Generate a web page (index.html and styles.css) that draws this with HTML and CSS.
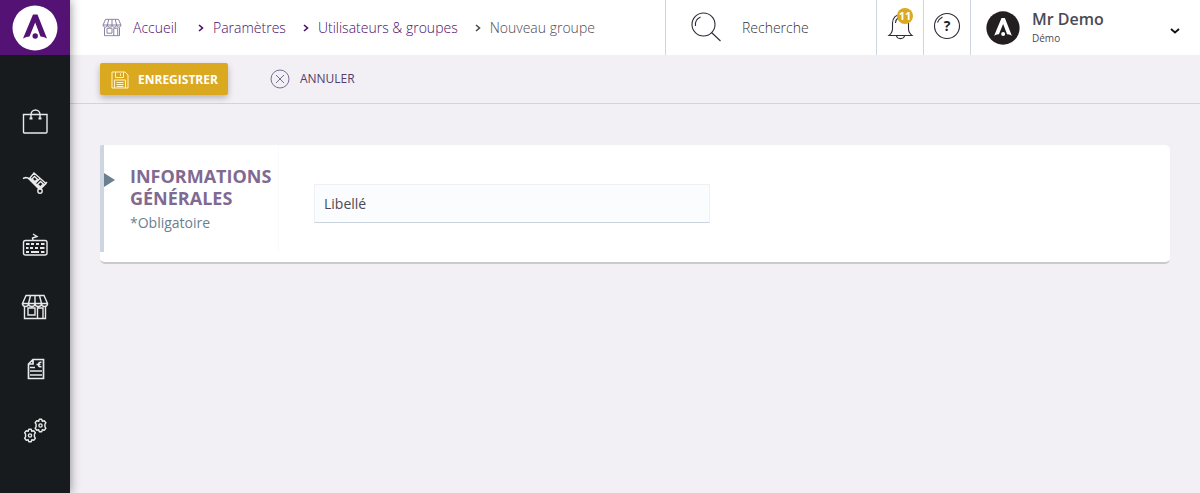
FILE: index.html
```html
<!DOCTYPE html>
<html lang="fr">
<head>
<meta charset="utf-8">
<meta name="viewport" content="width=device-width, initial-scale=1">
<title>Nouveau groupe</title>
<link rel="stylesheet" href="styles.css">
</head>
<body>
<svg class="defs" width="0" height="0" aria-hidden="true">
  <symbol id="mark" viewBox="0 0 46 46">
    <circle cx="23" cy="23" r="22.5" fill="var(--disc)"/>
    <path d="M21 9.500h4.500L35 33.500q-3.500-2-6.500-2L23.200 17.500 17.500 31.500q-3 0-6.500 2z" fill="var(--ink)"/>
    <circle cx="23.200" cy="31" r="2.700" fill="var(--ink)"/>
  </symbol>
  <symbol id="shop" viewBox="0 0 28 26">
    <path d="M5 1.500h18l3.500 8H1.500zM9.500 1.500l-2 8M14 1.500v8M18.500 1.500l2 8M1.500 9.500c0 4 6 4 6 0c0 4 6.500 4 6.500 0c0 4 6.500 4 6.500 0c0 4 6 4 6 0M3.500 13v11.500h21V13M7 14h7v7H7zM16.500 24.500V14H22v10.500"/>
  </symbol>
</svg>
<div class="app">
  <aside class="sidebar">
    <a class="brand" href="#" aria-label="Accueil"><svg width="46" height="46"><use href="#mark"/></svg></a>
    <nav class="menu" aria-label="Menu principal">
      <a href="#" aria-label="Ventes"><svg width="28" height="28" viewBox="0 0 28 28"><path d="M2.500 7.500h23.500V25a1 1 0 0 1-1 1H3.500a1 1 0 0 1-1-1zM10 11.500V7.500a4.500 4.500 0 0 1 9 0v4"/><path d="M8.500 11.500h3M17.500 11.500h3" stroke-width="2"/></svg></a>
      <a href="#" aria-label="Achats"><svg width="28" height="28" viewBox="0 0 28 28"><path d="M2 9.500l2.500-1 2.500.5L18.500 20.500M8.500 8.500l11 11 6.500-6.500M13 4l12 10.500-5.500 5.500L8.500 9.500zM19 9.500l-5.500 5.500M13.500 7.500l-2.500 2.500 3 2.800 2.500-2.600zM19.500 12.500l-3 3 2.800 2.500 3-3z"/><circle cx="19" cy="22" r="2.200"/></svg></a>
      <a href="#" aria-label="Caisse"><svg width="28" height="28" viewBox="0 0 28 28"><rect x="2.500" y="9.500" width="23.500" height="14.500" rx="2"/><path d="M12 3l4 2.500-4.500 1.500.5 2.500"/><path d="M5 13h3.500M10 13h3M15 13h3M20 13h3.500M5 17h2.500M9 17h3M14 17h3M19 17h4.500M5 21h3M10 21h8M20 21h3.500" stroke-width="2.200"/></svg></a>
      <a href="#" aria-label="Boutique"><svg width="28" height="26"><use href="#shop"/></svg></a>
      <a href="#" aria-label="Factures"><svg width="28" height="28" viewBox="0 0 28 28"><path d="M12 4.500h10.500V23.500h-15V9zM12 4.500V9H7.500M9 12.500h5M9 16h12M9 20h12" stroke-width="1.700"/><path d="M20.500 7.500c-3.500-1.500-4.500 5.500 0 4M15.500 9.500h4" stroke-width="1.600"/></svg></a>
      <a href="#" aria-label="Paramètres"><svg width="28" height="28" viewBox="0 0 28 28"><defs><path id="gear" d="M-1.200-6.200h2.400l.6 1.900 1.900-.5 1.700 2-1 1.700v2.200l1 1.700-1.700 2-1.900-.5-.6 1.900h-2.400l-.6-1.900-1.900.5-1.700-2 1-1.700v-2.200l-1-1.700 1.700-2 1.900.5z" stroke-linejoin="round"/></defs><use href="#gear" x="9" y="18.500"/><circle cx="9" cy="18.500" r="1.600"/><use href="#gear" x="19.500" y="8.500"/><circle cx="19.500" cy="8.500" r="1.600"/></svg></a>
    </nav>
  </aside>
  <div class="content">
    <header class="topbar">
      <nav class="crumbs" aria-label="Fil d'Ariane">
        <svg class="crumb-home" width="20" height="19" viewBox="0 0 28 26"><use href="#shop"/></svg>
        <ol>
          <li><a href="#">Accueil</a></li>
          <li><svg class="chev" viewBox="0 0 6 8"><path d="M1 1l3.500 3L1 7"/></svg><a href="#">Paramètres</a></li>
          <li><svg class="chev" viewBox="0 0 6 8"><path d="M1 1l3.500 3L1 7"/></svg><a href="#">Utilisateurs &amp; groupes</a></li>
          <li class="current"><svg class="chev" viewBox="0 0 6 8"><path d="M1 1l3.500 3L1 7"/></svg><span>Nouveau groupe</span></li>
        </ol>
      </nav>
      <label class="search">
        <svg width="30" height="30" viewBox="0 0 30 30"><circle cx="12.500" cy="12.500" r="11.500"/><path d="M20.500 20.500l9 8.500M4.500 14a8.500 8.500 0 0 1 5-9"/></svg>
        <input type="search" placeholder="Recherche" aria-label="Recherche">
      </label>
      <button class="tool" type="button" aria-label="Notifications">
        <svg width="28" height="28" viewBox="0 0 28 28"><path d="M3 23.500c2.500-2 3.500-4 3.500-7V11c0-5 3.500-8.500 8-8.500s8 3.500 8 8.500v5.500c0 3 1 5 3.500 7zM10.500 24c.8 3.500 7.200 3.500 8 0M9.500 11c0-2.500 1-4 2.500-5"/></svg>
        <span class="badge">11</span>
      </button>
      <button class="tool" type="button" aria-label="Aide">
        <svg width="28" height="28" viewBox="0 0 28 28"><circle cx="14" cy="14" r="12.500"/><path d="M4.500 10.500a10.500 10.500 0 0 1 5-5.500"/><text x="14" y="19">?</text></svg>
      </button>
      <button class="user" type="button">
        <svg class="avatar" width="34" height="34"><use href="#mark"/></svg>
        <span class="who"><strong>Mr Demo</strong><small>Démo</small></span>
        <svg class="down" width="10" height="6" viewBox="0 0 10 6"><path d="M1 1l4 3.500L9 1"/></svg>
      </button>
    </header>
    <div class="actions">
      <button class="save" type="submit" form="group">
        <svg width="18" height="18" viewBox="0 0 18 18"><path d="M1 1h13l3 3v13H1zM4.500 1v5.500h8V1M9.500 2.500v2.500M3.500 17V9h11v8M5.500 11.500h7M5.500 13.500h7M5.500 15.500h7"/></svg>
        Enregistrer
      </button>
      <button class="cancel" type="button">
        <svg width="20" height="20" viewBox="0 0 20 20"><circle cx="10" cy="10" r="9"/><path d="M6 6l8 8M14 6l-8 8"/></svg>
        Annuler
      </button>
    </div>
    <main>
      <form class="card" id="group">
        <div class="intro">
          <h2>Informations générales</h2>
          <p>*Obligatoire</p>
        </div>
        <div class="fields">
          <input class="field" type="text" placeholder="Libellé" aria-label="Libellé" required>
        </div>
      </form>
    </main>
  </div>
</div>
</body>
</html>
```

FILE: styles.css
```css
* { box-sizing: border-box; }

body {
  margin: 0;
  background: #f2f0f5;
  font-family: "Open Sans", sans-serif;
  font-size: 14px;
  line-height: 20px;
  color: #4a4a55;
}

.defs { position: absolute; }

svg { display: block; flex: none; fill: none; }

a { color: inherit; text-decoration: none; }

button, input { font: inherit; color: inherit; }

button { border: 0; padding: 0; background: none; cursor: pointer; }

.app { display: flex; min-height: 100vh; }

/* Sidebar */
.sidebar {
  position: relative;
  z-index: 1;
  flex: none;
  width: 70px;
  background: #171b1d;
  box-shadow: 0 0 10px rgba(0, 0, 0, 0.45);
}

.brand {
  --disc: #fff;
  --ink: #551275;
  display: flex;
  align-items: center;
  justify-content: center;
  height: 55px;
  padding-top: 1px;
  background: #551275;
}

.menu { padding-top: 35px; }

.menu a {
  display: flex;
  align-items: center;
  justify-content: center;
  height: 62px;
}

.menu svg { stroke: #e8e9ea; stroke-width: 1.4; }

/* Top bar */
.content { flex: 1; min-width: 0; }

.topbar {
  display: flex;
  height: 55px;
  background: #fff;
}

.crumbs {
  display: flex;
  flex: 1;
  align-items: center;
  gap: 11px;
  padding-left: 32px;
  font-weight: 300;
  color: #4b0d6b;
  white-space: nowrap;
}

.crumb-home { stroke: #83799a; stroke-width: 1.300; }

.crumbs ol {
  display: flex;
  gap: 17px;
  margin: 0;
  padding: 0;
  list-style: none;
}

.crumbs li { display: flex; align-items: center; gap: 9px; }

.crumbs li:nth-child(2) { padding-left: 4px; }

.crumbs .current { color: #4a4a55; }

.chev { width: 6px; height: 8px; stroke: currentColor; stroke-width: 1.600; }

.search {
  display: flex;
  align-items: center;
  gap: 21px;
  width: 211px;
  padding: 0 16px 2px 25px;
  border-left: 1px solid #cdd6de;
}

.search svg, .tool svg { stroke: #2e2a38; stroke-width: 1.100; }

.search input {
  flex: 1;
  min-width: 0;
  padding: 2px 0 0;
  border: 0;
  outline: 0;
  background: none;
  font-weight: 300;
  appearance: none;
}

.search input::placeholder { color: #33333b; opacity: 1; }

.tool {
  position: relative;
  display: flex;
  align-items: center;
  justify-content: center;
  width: 47px;
  padding-bottom: 3px;
  border-left: 1px solid #cdd6de;
}

.tool text {
  fill: #221f28;
  stroke: none;
  font-size: 14px;
  font-weight: 700;
  text-anchor: middle;
}

.badge {
  position: absolute;
  top: 8px;
  right: 10px;
  width: 16px;
  height: 16px;
  border-radius: 50%;
  background: #dba91f;
  color: #fff;
  font-size: 11px;
  font-weight: 700;
  line-height: 16px;
}

.user {
  display: flex;
  align-items: center;
  gap: 12px;
  width: 230px;
  padding: 0 20px 0 15px;
  border-left: 1px solid #cdd6de;
  text-align: left;
}

.avatar { --disc: #231f20; --ink: #fff; }

.who { flex: 1; display: grid; padding-bottom: 2px; }

.who strong { font-size: 16px; font-weight: 600; line-height: 22px; }

.who small { font-size: 10px; line-height: 16px; }

.down { margin-top: 6px; stroke: #111; stroke-width: 1.800; }

/* Action bar */
.actions {
  display: flex;
  align-items: center;
  gap: 42px;
  height: 49px;
  padding: 0 30px;
  border-bottom: 1px solid #cdd6de;
  font-size: 12px;
}

.save, .cancel {
  display: flex;
  align-items: center;
  gap: 9px;
  text-transform: uppercase;
}

.save {
  height: 32px;
  padding: 1px 10px 0 11px;
  border-radius: 2px;
  background: #dba91f;
  box-shadow: 0 3px 6px rgba(0, 0, 0, 0.25);
  color: #fff;
  font-weight: 700;
}

.save svg { stroke: #fff3c4; }

.cancel { color: #543c6b; gap: 10px; }

.cancel svg { stroke: #7d6b92; }

/* Form card */
main { padding: 41px 30px; }

.card {
  display: flex;
  padding-bottom: 10px;
  border-bottom: 2px solid #cbc9cd;
  border-radius: 5px;
  background: #fff;
}

.intro {
  position: relative;
  width: 179px;
  min-height: 107px;
  padding: 20px 0 18px 26px;
  border-left: 4px solid #cdd6de;
  border-right: 1px solid #fafafc;
  border-top-left-radius: 2px;
}

.intro::before {
  content: "";
  position: absolute;
  top: 28px;
  left: 0;
  border: solid transparent;
  border-width: 7px 0 7px 11px;
  border-left-color: #6b7f90;
}

h2 {
  margin: 0;
  color: #806a92;
  font-size: 18px;
  font-weight: 700;
  line-height: 22px;
  text-transform: uppercase;
}

p { margin: 4px 0 0; color: #6b7f90; }

.fields { flex: 1; padding: 39px 35px 0; }

.field {
  display: block;
  width: 100%;
  max-width: 396px;
  height: 39px;
  padding: 0 9px;
  border: 1px solid #edf1f5;
  border-bottom-color: #c9d4df;
  border-radius: 0;
  outline: 0;
  background: #fafcfe;
}

.field::placeholder { color: #4a4a55; opacity: 1; }
```
